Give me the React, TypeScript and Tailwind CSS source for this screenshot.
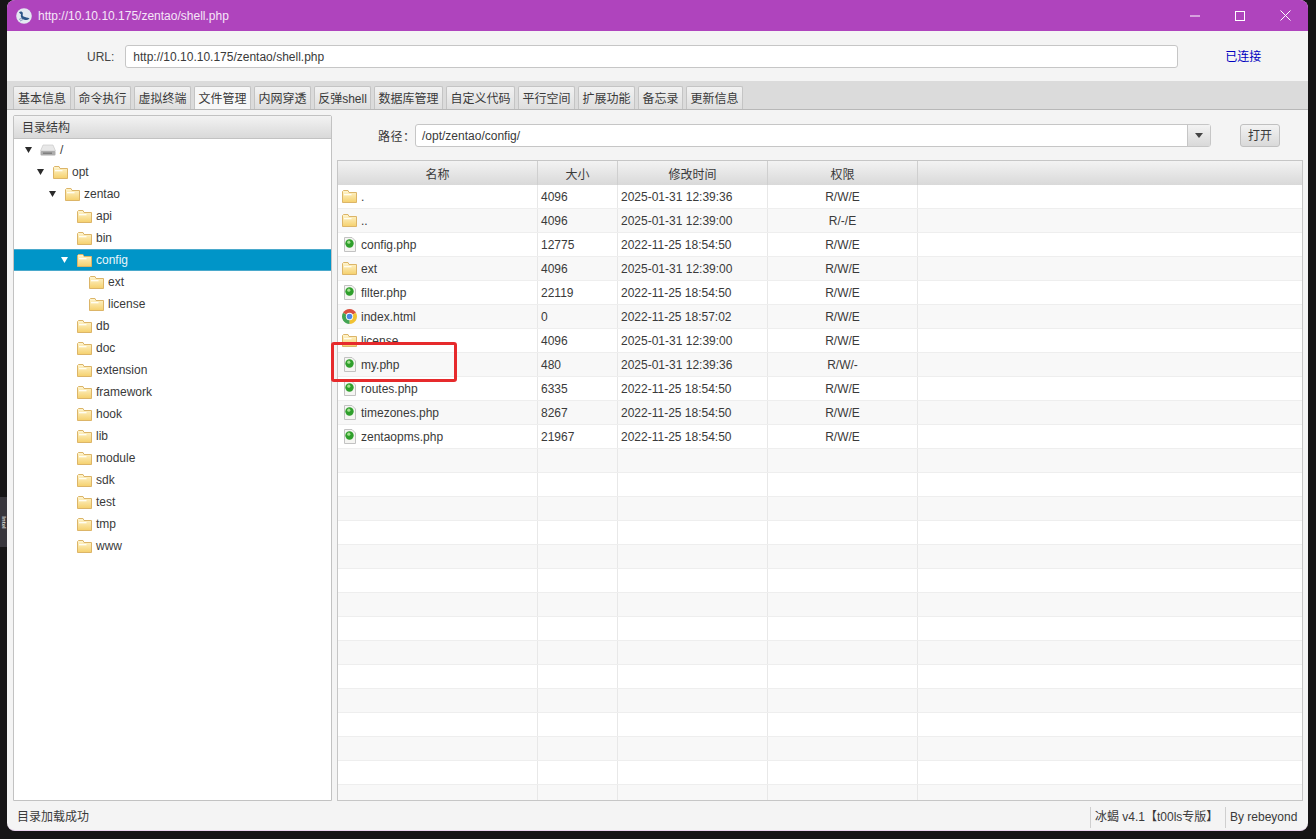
import React from 'react';

const tabs = [
  { name: '基本信息', w: 'w-[58px]' },
  { name: '命令执行', w: 'w-[57px]' },
  { name: '虚拟终端', w: 'w-[57px]' },
  { name: '文件管理', w: 'w-[57px]', active: true },
  { name: '内网穿透', w: 'w-[57px]' },
  { name: '反弹shell', w: 'w-[57px]' },
  { name: '数据库管理', w: 'w-[69px]' },
  { name: '自定义代码', w: 'w-[69px]' },
  { name: '平行空间', w: 'w-[57px]' },
  { name: '扩展功能', w: 'w-[57px]' },
  { name: '备忘录', w: 'w-[45px]' },
  { name: '更新信息', w: 'w-[57px]' },
];

const tree = [
  { name: '/', level: 0, open: true, drive: true },
  { name: 'opt', level: 1, open: true },
  { name: 'zentao', level: 2, open: true },
  { name: 'api', level: 3 },
  { name: 'bin', level: 3 },
  { name: 'config', level: 3, open: true, selected: true },
  { name: 'ext', level: 4 },
  { name: 'license', level: 4 },
  { name: 'db', level: 3 },
  { name: 'doc', level: 3 },
  { name: 'extension', level: 3 },
  { name: 'framework', level: 3 },
  { name: 'hook', level: 3 },
  { name: 'lib', level: 3 },
  { name: 'module', level: 3 },
  { name: 'sdk', level: 3 },
  { name: 'test', level: 3 },
  { name: 'tmp', level: 3 },
  { name: 'www', level: 3 },
];

const indents = ['pl-[11px]', 'pl-[23px]', 'pl-[35px]', 'pl-[47px]', 'pl-[59px]'];

const files = [
  { name: '.', size: '4096', time: '2025-01-31 12:39:36', perm: 'R/W/E', icon: 'folder' },
  { name: '..', size: '4096', time: '2025-01-31 12:39:00', perm: 'R/-/E', icon: 'folder' },
  { name: 'config.php', size: '12775', time: '2022-11-25 18:54:50', perm: 'R/W/E', icon: 'php' },
  { name: 'ext', size: '4096', time: '2025-01-31 12:39:00', perm: 'R/W/E', icon: 'folder' },
  { name: 'filter.php', size: '22119', time: '2022-11-25 18:54:50', perm: 'R/W/E', icon: 'php' },
  { name: 'index.html', size: '0', time: '2022-11-25 18:57:02', perm: 'R/W/E', icon: 'chrome' },
  { name: 'license', size: '4096', time: '2025-01-31 12:39:00', perm: 'R/W/E', icon: 'folder' },
  { name: 'my.php', size: '480', time: '2025-01-31 12:39:36', perm: 'R/W/-', icon: 'php' },
  { name: 'routes.php', size: '6335', time: '2022-11-25 18:54:50', perm: 'R/W/E', icon: 'php' },
  { name: 'timezones.php', size: '8267', time: '2022-11-25 18:54:50', perm: 'R/W/E', icon: 'php' },
  { name: 'zentaopms.php', size: '21967', time: '2022-11-25 18:54:50', perm: 'R/W/E', icon: 'php' },
];

const emptyRows = Array.from({ length: 15 }, (_, i) => i);

const FolderIcon = () => (
  <svg width="15" height="13" viewBox="0 0 15 13" className="shrink-0">
    <defs>
      <linearGradient id="fold" x1="0" y1="0" x2="0" y2="1">
        <stop offset="0" stopColor="#fff6d2" />
        <stop offset="1" stopColor="#f5d06c" />
      </linearGradient>
    </defs>
    <path d="M.5 1.5 L.5 12.5 L14.5 12.5 L14.5 2.5 L7 2.5 L6 .5 L1.5 .5 Z" fill="url(#fold)" stroke="#dcb568" strokeWidth="1" />
    <rect x="2" y="4" width="7.5" height="1.3" fill="#fffdf2" />
  </svg>
);

const PhpIcon = () => (
  <svg width="12" height="15" viewBox="0 0 12 15" className="shrink-0">
    <path d="M.5 .5 L8 .5 L11.5 4 L11.5 14.5 L.5 14.5 Z" fill="#f5f5f2" stroke="#c2c2c2" />
    <circle cx="5.5" cy="6.5" r="4.2" fill="#2f9f2c" />
    <circle cx="4.8" cy="5.2" r="1.6" fill="#a3e08f" />
  </svg>
);

const ChromeIcon = () => (
  <svg width="15" height="15" viewBox="0 0 16 16" className="shrink-0">
    <path d="M8 8 L1.1 4 A8 8 0 0 1 14.9 4 Z" fill="#d9503f" />
    <path d="M8 8 L14.9 4 A8 8 0 0 1 8 16 Z" fill="#f1c232" />
    <path d="M8 8 L8 16 A8 8 0 0 1 1.1 4 Z" fill="#43a453" />
    <circle cx="8" cy="8" r="3.9" fill="#fff" />
    <circle cx="8" cy="8" r="3" fill="#4a87e8" />
  </svg>
);

const DriveIcon = () => (
  <svg width="16" height="12" viewBox="0 0 16 12" className="shrink-0">
    <path d="M3 1 L13 1 L15.5 7 L.5 7 Z" fill="#e8e8e8" stroke="#c4c4c4" strokeWidth=".6" />
    <rect x=".5" y="7" width="15" height="4.5" rx="1" fill="#adadad" />
    <rect x="3" y="8.5" width="9" height="1.4" fill="#7c7c7c" />
  </svg>
);

const AppLogo = () => (
  <svg width="16" height="16" viewBox="0 0 16 16" className="shrink-0">
    <circle cx="8" cy="8" r="7.8" fill="#e3e9f1" />
    <path d="M3 4.5 C4 3 6.5 3.2 6.8 5 C7 6.5 6 7.5 7.5 8.5 C9.5 9.6 11.5 9.3 13.5 10.5 C11.5 12.5 8.5 12.5 6.5 11 C4.8 9.7 4.6 8 5 6.2 C4.4 5.6 3.6 5.3 3 4.5 Z" fill="#2c5688" />
    <path d="M3 11.5 L6 10 M4 13 L7 11.5" stroke="#6d8db5" strokeWidth=".8" />
  </svg>
);

const Caret = ({ white }: { white?: boolean }) => (
  <svg width="7" height="6" viewBox="0 0 7 6" className="shrink-0">
    <path d="M0 0 L7 0 L3.5 6 Z" fill={white ? '#ffffff' : '#2b2b2b'} />
  </svg>
);

const headerGradient = 'bg-gradient-to-b from-[#f3f3f3] to-[#d9d9d9]';

function App() {
  return (
    <div className="relative h-[839px] w-[1316px] overflow-hidden bg-[#161516] px-[7px] text-[12px] text-[#3a3a3a] [font-family:'Liberation_Sans','Noto_Sans_CJK_SC',sans-serif]">
      {/* taskbar sliver behind the window */}
      <div className="absolute left-0 top-[497px] flex h-[50px] w-[7px] items-center justify-center overflow-hidden bg-[#38363c]">
        <span className="rotate-90 text-[6px] font-bold text-[#d8d8d8]">Intel</span>
      </div>
      <div className="relative flex h-[831px] w-[1301px] flex-col overflow-hidden rounded-[8px] border-b border-[#ecd6f0] bg-[#f4f4f4]">
        {/* title bar */}
        <div className="flex h-[31px] shrink-0 items-center bg-[#af44bd] pl-[9px] text-white">
          <AppLogo />
          <span className="ml-[6px] text-[12px] text-[#f6e6f8]">http://10.10.10.175/zentao/shell.php</span>
          <div className="ml-auto flex items-center gap-[35px] pr-[17px]">
            <svg width="10" height="10" viewBox="0 0 10 10"><path d="M0 5 H10" stroke="#fff" strokeWidth="1" /></svg>
            <svg width="10" height="10" viewBox="0 0 10 10"><rect x=".5" y=".5" width="9" height="9" fill="none" stroke="#fff" /></svg>
            <svg width="11" height="11" viewBox="0 0 11 11"><path d="M.5 .5 L10.5 10.5 M10.5 .5 L.5 10.5" stroke="#fff" strokeWidth="1" /></svg>
          </div>
        </div>

        {/* url bar */}
        <div className="flex h-[50px] shrink-0 items-center bg-[#f4f4f4] pt-[1px]">
          <span className="ml-[80px] text-[#444444]">URL:</span>
          <div className="ml-[11px] flex h-[23px] w-[1053px] items-center rounded-[3px] border border-[#c6c6c6] bg-white pl-[7px]">
            http://10.10.10.175/zentao/shell.php
          </div>
          <span className="ml-[47px] text-[#0000c0]">已连接</span>
        </div>

        {/* tabs */}
        <div className="flex h-[29px] shrink-0 items-end gap-[3px] border-b border-[#b8b8b8] bg-[#dbdbdb] pl-[6px]">
          {tabs.map((t) => (
            <div
              key={t.name}
              className={`flex h-[23px] items-center justify-center rounded-t-[2px] border border-b-0 border-[#c4c4c4] pt-[2px] ${t.w} ${
                t.active ? 'bg-[#f7f7f7]' : 'bg-gradient-to-b from-[#f2f2f2] to-[#dedede]'
              }`}
            >
              {t.name}
            </div>
          ))}
        </div>

        {/* main */}
        <div className="flex min-h-0 flex-1 gap-[5px] pb-[2px] pl-[6px] pr-[5px] pt-[5px]">
          {/* tree */}
          <div className="flex w-[319px] shrink-0 flex-col rounded-t-[2px] border border-[#c2c2c2] bg-white">
            <div className={`flex h-[23px] shrink-0 items-center border-b border-[#c2c2c2] pl-[8px] pt-[1px] ${headerGradient}`}>目录结构</div>
            <div>
              {tree.map((n) => (
                <div
                  key={n.name}
                  className={`flex h-[22px] items-center ${indents[n.level]} ${
                    n.selected ? 'border-y border-[#4aa9cc] bg-[#0095c8] text-[#e9f6fb]' : ''
                  }`}
                >
                  <span className="flex w-[15px] shrink-0">{n.open ? <Caret white={n.selected} /> : null}</span>
                  <span className={n.drive ? 'flex items-center' : 'ml-[1px] flex items-center'}>
                    {n.drive ? <DriveIcon /> : <FolderIcon />}
                  </span>
                  <span className="ml-[4px]">{n.name}</span>
                </div>
              ))}
            </div>
          </div>

          {/* files */}
          <div className="flex min-w-0 flex-1 flex-col">
            <div className="flex h-[45px] shrink-0 items-start pt-[9px]">
              <span className="ml-[41px] mt-[4px] w-[37px] whitespace-nowrap tracking-[0.5px]">路径：</span>
              <div className="flex h-[23px] w-[796px] items-center rounded-[3px] border border-[#c6c6c6] bg-white pl-[6px]">
                <span className="flex-1">/opt/zentao/config/</span>
                <div className={`flex h-full w-[23px] items-center justify-center border-l border-[#c6c6c6] ${headerGradient}`}>
                  <svg width="8" height="5" viewBox="0 0 8 5"><path d="M0 0 H8 L4 5 Z" fill="#444444" /></svg>
                </div>
              </div>
              <div className={`ml-[29px] flex h-[23px] w-[40px] items-center justify-center rounded-[3px] border border-[#c0c0c0] ${headerGradient}`}>打开</div>
            </div>

            <div className="min-h-0 flex-1 overflow-hidden border border-[#c6c6c6] bg-white">
              <div className={`grid h-[24px] grid-cols-[200px_80px_150px_150px_1fr] items-center text-center ${headerGradient}`}>
                <div className="flex h-full items-center justify-center border-r border-[#cfcfcf] pt-[3px]">名称</div>
                <div className="flex h-full items-center justify-center border-r border-[#cfcfcf] pt-[3px]">大小</div>
                <div className="flex h-full items-center justify-center border-r border-[#cfcfcf] pt-[3px]">修改时间</div>
                <div className="flex h-full items-center justify-center border-r border-[#cfcfcf] pt-[3px]">权限</div>
                <div />
              </div>
              {files.map((f, i) => (
                <div
                  key={f.name}
                  className={`grid h-[24px] grid-cols-[200px_80px_150px_150px_1fr] border-b border-[#eeeeee] ${i % 2 ? 'bg-[#f8f8f8]' : 'bg-white'}`}
                >
                  <div className="flex items-center border-r border-[#e8e8e8] pl-[4px]">
                    <span className="flex w-[15px] justify-center">
                      {f.icon === 'folder' && <FolderIcon />}
                      {f.icon === 'php' && <PhpIcon />}
                      {f.icon === 'chrome' && <ChromeIcon />}
                    </span>
                    <span className="ml-[4px]">{f.name}</span>
                  </div>
                  <div className="flex items-center border-r border-[#e8e8e8] pl-[3px]">{f.size}</div>
                  <div className="flex items-center border-r border-[#e8e8e8] pl-[3px]">{f.time}</div>
                  <div className="flex items-center justify-center border-r border-[#e8e8e8]">{f.perm}</div>
                  <div />
                </div>
              ))}
              {emptyRows.map((r) => (
                <div
                  key={r}
                  className={`grid h-[24px] grid-cols-[200px_80px_150px_150px_1fr] border-b border-[#eeeeee] ${r % 2 ? 'bg-white' : 'bg-[#f8f8f8]'}`}
                >
                  <div className="border-r border-[#e8e8e8]" />
                  <div className="border-r border-[#e8e8e8]" />
                  <div className="border-r border-[#e8e8e8]" />
                  <div className="border-r border-[#e8e8e8]" />
                  <div />
                </div>
              ))}
            </div>
          </div>
        </div>

        {/* status bar */}
        <div className="flex h-[27px] shrink-0 items-center pl-[10px] pt-[1px]">
          <span>目录加载成功</span>
          <div className="ml-auto flex h-[21px] items-center">
            <span className="flex h-full w-[135px] items-center whitespace-nowrap border-l border-[#cfcfcf] pl-[4px]">冰蝎 v4.1【t00ls专版】</span>
            <span className="flex h-full w-[83px] items-center whitespace-nowrap border-l border-[#cfcfcf] pl-[4px]">By rebeyond</span>
          </div>
        </div>

        {/* annotation over the my.php row */}
        <div className="absolute left-[324px] top-[342px] h-[40px] w-[126px] rounded-[3px] border-[3px] border-[#e62a2c]" />
      </div>
    </div>
  );
}

export default App;
